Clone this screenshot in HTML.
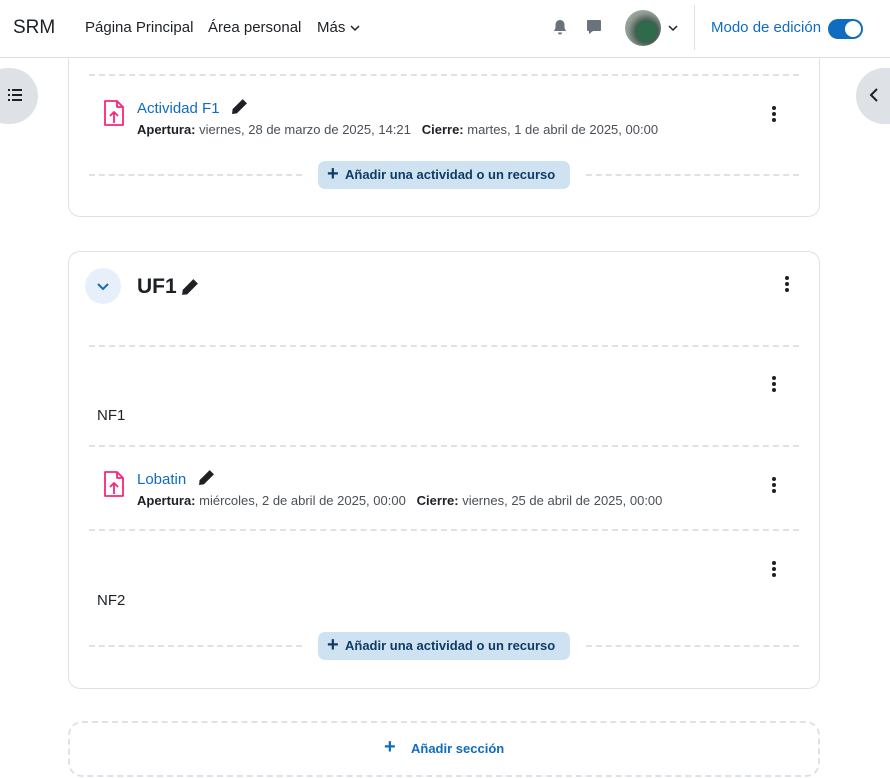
<!DOCTYPE html>
<html><head><meta charset="utf-8"><style>
*{box-sizing:border-box;margin:0;padding:0}
body{width:890px;height:778px;overflow:hidden;background:#fff;font-family:"Liberation Sans",sans-serif;color:#1d2125;position:relative}
.abs{position:absolute}
.hdr{position:absolute;left:0;top:0;width:890px;height:58px;border-bottom:1px solid #dee2e6;background:#fff;z-index:5}
.hdr span{position:absolute;font-size:15px;top:19px}
.card{position:absolute;border:1px solid #dee2e6;border-radius:12px;background:#fff}
.dash{position:absolute;height:0;border-top:2px dashed #dee2e6}
.btn{position:absolute;background:#cfe2f2;border-radius:7px;color:#0f3b66;font-weight:bold;font-size:13px;height:28px;line-height:28px;padding-left:27px}
.btn:before{content:"+";position:absolute;left:9px;top:-1px;font-size:20px;font-weight:bold}
.kebab{position:absolute;width:4px}
.kebab i{display:block;width:4px;height:4px;border-radius:2px;background:#1d2125;margin-bottom:2px}
.name{position:absolute;color:#0f6cbf;font-size:15px}
.meta{position:absolute;font-size:13px;color:#495057}
.meta b{color:#1d2125}
.txt{position:absolute;font-size:15px}
</style></head><body>
<div class="hdr">
<span style="left:13px;font-size:19px;top:17px">SRM</span>
<span style="left:85px">Página Principal</span>
<span style="left:208px">Área personal</span>
<span style="left:317px">Más <svg width="10" height="8" viewBox="0 0 10 8"><path d="M1 2l4 4 4-4" stroke="#1d2125" stroke-width="1.5" fill="none"/></svg></span>
<svg class="abs" style="left:553px;top:19px" width="14" height="16" viewBox="0 0 14 16"><path d="M7 1c-3 0-4.5 2.3-4.5 5v3L1 12h12l-1.5-3V6C11.5 3.3 10 1 7 1z M5 13.5a2 2 0 004 0z" fill="#6a737b"/></svg>
<svg class="abs" style="left:586px;top:19px" width="16" height="16" viewBox="0 0 16 16"><path d="M2 1h12a1 1 0 011 1v9a1 1 0 01-1 1H7l-4 3v-3H2a1 1 0 01-1-1V2a1 1 0 011-1z" fill="#6a737b"/></svg>
<div class="abs" style="left:625px;top:10px;width:36px;height:36px;border-radius:50%;background:radial-gradient(circle at 60% 60%,#2f6a4a 0 35%,#4a5a52 36%,#8a9a90 60%,#c8c0b0 100%)"></div>
<svg class="abs" style="left:668px;top:24px" width="10" height="8" viewBox="0 0 10 8"><path d="M1 2l4 4 4-4" stroke="#1d2125" stroke-width="1.5" fill="none"/></svg>
<div class="abs" style="left:694px;top:5px;width:1px;height:45px;background:#dee2e6"></div>
<span style="left:711px;color:#0f6cbf">Modo de edición</span>
<div class="abs" style="left:828px;top:19px;width:35px;height:20px;border-radius:10px;background:#0f6cbf"><div class="abs" style="left:17px;top:2px;width:16px;height:16px;border-radius:50%;background:#fff"></div></div>
</div>

<div class="abs" style="left:-20px;top:68px;width:58px;height:56px;border-radius:28px;background:#dee2e6;z-index:6"></div>
<svg class="abs" style="left:8px;top:89px;z-index:7" width="14" height="12" viewBox="0 0 14 12"><g fill="#1d2125"><rect x="0" y="0" width="2" height="2"/><rect x="0" y="5" width="2" height="2"/><rect x="0" y="10" width="2" height="2"/><rect x="4" y="0" width="10" height="2"/><rect x="4" y="5" width="10" height="2"/><rect x="4" y="10" width="10" height="2"/></g></svg>
<div class="abs" style="left:856px;top:68px;width:60px;height:56px;border-radius:28px;background:#dee2e6;z-index:6"></div>
<svg class="abs" style="left:869px;top:88px;z-index:7" width="10" height="14" viewBox="0 0 10 14"><path d="M8 1L2 7l6 6" stroke="#1d2125" stroke-width="2" fill="none"/></svg>

<div class="card" style="left:68px;top:-40px;width:752px;height:257px"></div>
<div class="dash" style="left:89px;top:74px;width:710px"></div>
<svg class="abs" style="left:103px;top:99px" width="22" height="28" viewBox="0 0 22 28"><path d="M2 2h12l6 6v18H2z M14 2v6h6 M11 24v-11 M7 17l4-4 4 4" stroke="#f7257b" stroke-width="1.8" fill="none" stroke-linejoin="round"/></svg>
<div class="name" style="left:137px;top:100px">Actividad F1</div>
<svg class="abs" style="left:231px;top:98px" width="17" height="17" viewBox="0 0 16 16"><path d="M11 1l4 4-9.5 9.5L1 15l.5-4.5z" fill="#1d2125"/></svg>
<div class="meta" style="left:137px;top:122px"><b>Apertura:</b> viernes, 28 de marzo de 2025, 14:21 &nbsp; <b>Cierre:</b> martes, 1 de abril de 2025, 00:00</div>
<div class="kebab" style="left:772px;top:106px"><i></i><i></i><i></i></div>
<div class="dash" style="left:89px;top:174px;width:213px"></div>
<div class="dash" style="left:586px;top:174px;width:213px"></div>
<div class="btn" style="left:318px;top:161px;width:252px">Añadir una actividad o un recurso</div>

<div class="card" style="left:68px;top:251px;width:752px;height:438px"></div>
<div class="abs" style="left:85px;top:268px;width:36px;height:36px;border-radius:50%;background:#e7f0fa"></div>
<svg class="abs" style="left:96px;top:282px" width="14" height="10" viewBox="0 0 14 10"><path d="M2 2l5 5 5-5" stroke="#0f6cbf" stroke-width="2" fill="none"/></svg>
<div class="abs" style="left:137px;top:275px;font-size:21px;font-weight:bold">UF1</div>
<svg class="abs" style="left:181px;top:278px" width="18" height="18" viewBox="0 0 16 16"><path d="M11 1l4 4-9.5 9.5L1 15l.5-4.5z" fill="#1d2125"/></svg>
<div class="kebab" style="left:785px;top:276px"><i></i><i></i><i></i></div>
<div class="dash" style="left:89px;top:345px;width:710px"></div>
<div class="kebab" style="left:772px;top:376px"><i></i><i></i><i></i></div>
<div class="txt" style="left:97px;top:407px">NF1</div>
<div class="dash" style="left:89px;top:445px;width:710px"></div>
<svg class="abs" style="left:103px;top:470px" width="22" height="28" viewBox="0 0 22 28"><path d="M2 2h12l6 6v18H2z M14 2v6h6 M11 24v-11 M7 17l4-4 4 4" stroke="#f7257b" stroke-width="1.8" fill="none" stroke-linejoin="round"/></svg>
<div class="name" style="left:137px;top:471px">Lobatin</div>
<svg class="abs" style="left:198px;top:469px" width="17" height="17" viewBox="0 0 16 16"><path d="M11 1l4 4-9.5 9.5L1 15l.5-4.5z" fill="#1d2125"/></svg>
<div class="meta" style="left:137px;top:493px"><b>Apertura:</b> miércoles, 2 de abril de 2025, 00:00 &nbsp; <b>Cierre:</b> viernes, 25 de abril de 2025, 00:00</div>
<div class="kebab" style="left:772px;top:477px"><i></i><i></i><i></i></div>
<div class="dash" style="left:89px;top:529px;width:710px"></div>
<div class="kebab" style="left:772px;top:561px"><i></i><i></i><i></i></div>
<div class="txt" style="left:97px;top:592px">NF2</div>
<div class="dash" style="left:89px;top:645px;width:213px"></div>
<div class="dash" style="left:586px;top:645px;width:213px"></div>
<div class="btn" style="left:318px;top:632px;width:252px">Añadir una actividad o un recurso</div>

<div class="abs" style="left:68px;top:721px;width:752px;height:56px;border:2px dashed #dee2e6;border-radius:14px"></div>
<div class="abs" style="left:384px;top:736px;color:#0f6cbf;font-size:20px;font-weight:bold">+</div>
<div class="abs" style="left:411px;top:741px;color:#0f6cbf;font-size:13px;font-weight:bold">Añadir sección</div>
</body></html>
